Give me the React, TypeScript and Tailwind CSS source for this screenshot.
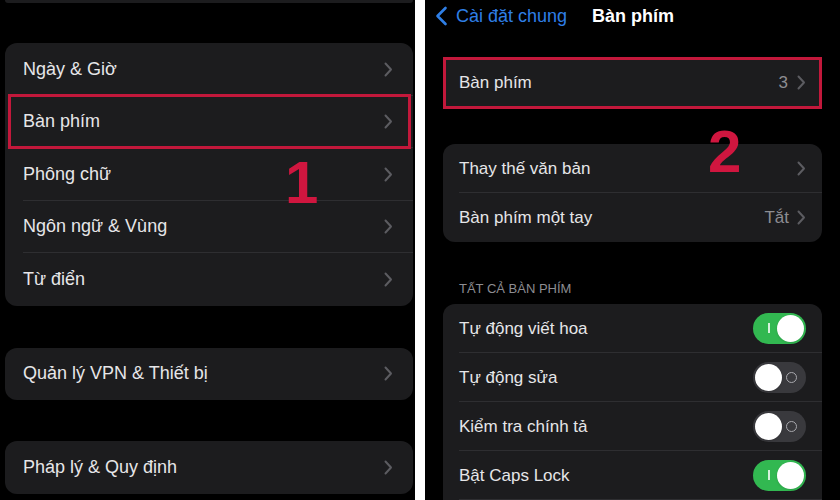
import React from "react"

const font = { fontFamily: '"Liberation Sans", Arial, sans-serif' }

function Chevron({ className = "" }: { className?: string }) {
  return (
    <svg width="9" height="15" viewBox="0 0 9 15" className={className}>
      <path d="M1.5 1.5 L7 7.5 L1.5 13.5" fill="none" stroke="#5c5c61" strokeWidth="2" strokeLinecap="round" strokeLinejoin="round" />
    </svg>
  )
}

function Toggle({ on }: { on: boolean }) {
  return (
    <div
      className={`relative w-[53px] h-[31px] rounded-full flex items-center ${on ? "bg-[#32b851] justify-end" : "bg-[#39393d] justify-start"} px-[2px]`}
    >
      {on ? (
        <span className="absolute left-[15px] top-[10px] w-[1.5px] h-[10px] bg-white/80" />
      ) : (
        <span className="absolute right-[9px] top-[10px] w-[11px] h-[11px] rounded-full border-[1.5px] border-[#a8a8ad]" />
      )}
      <div className="relative w-[27px] h-[27px] rounded-full bg-white shadow" />
    </div>
  )
}

function LeftRow({ label, last, boxed }: { label: string; last?: boolean; boxed?: boolean }) {
  return (
    <div className="relative h-[52.5px] flex items-center pl-[18px] pr-[20px]">
      <span className="flex-1 text-[18px] text-[#e6e6e8]">{label}</span>
      <Chevron />
      {!last && <div className="absolute left-[18px] right-0 bottom-0 h-px bg-[#2e2e31]" />}
      {boxed && (
        <div className="absolute left-[3px] right-[2px] -top-[2px] -bottom-[1px] border-[3px] border-[#c2183b]" />
      )}
    </div>
  )
}

function RightRow({
  label,
  value,
  toggle,
  last,
  chevron = true,
}: {
  label: string
  value?: string
  toggle?: boolean
  last?: boolean
  chevron?: boolean
}) {
  return (
    <div className="relative h-[49px] flex items-center pl-[16px] pr-[16px]">
      <span className="flex-1 text-[17px] text-[#e6e6e8]">{label}</span>
      {value && <span className="text-[17px] text-[#8d8d92] mr-[8px]">{value}</span>}
      {toggle !== undefined ? <Toggle on={toggle} /> : chevron && <Chevron />}
      {!last && <div className="absolute left-[16px] right-0 bottom-0 h-px bg-[#2e2e31]" />}
    </div>
  )
}

export default function App() {
  return (
    <div className="w-[840px] h-[500px] flex bg-white overflow-hidden" style={font}>
      {/* left screen */}
      <div className="relative w-[415px] h-[500px] bg-black overflow-hidden flex flex-col pl-[5px] pr-[2px]">
        <div className="h-[3px] bg-[#1c1c1e] rounded-b-[10px]" />
        <div className="mt-[40px] bg-[#1c1c1e] rounded-[12px]">
          <LeftRow label="Ngày & Giờ" />
          <LeftRow label="Bàn phím" boxed />
          <LeftRow label="Phông chữ" />
          <LeftRow label="Ngôn ngữ & Vùng" />
          <LeftRow label="Từ điển" last />
        </div>
        <div className="mt-[42px] bg-[#1c1c1e] rounded-[12px]">
          <LeftRow label="Quản lý VPN & Thiết bị" last />
        </div>
        <div className="mt-[41px] bg-[#1c1c1e] rounded-[12px]">
          <LeftRow label="Pháp lý & Quy định" last />
        </div>
        <div className="absolute left-[285px] top-[153px] text-[60px] font-bold leading-none text-[#d0163f]">1</div>
      </div>

      <div className="w-[10px]" />

      {/* right screen */}
      <div className="relative flex-1 h-[500px] bg-black overflow-hidden flex flex-col px-[18px]">
        <div className="h-[33px] flex items-center -ml-[8px]">
          <svg width="13" height="20" viewBox="0 0 13 20" className="mr-[8px]">
            <path d="M10.5 2 L2.5 10 L10.5 18" fill="none" stroke="#2f7fe6" strokeWidth="2.6" strokeLinecap="round" strokeLinejoin="round" />
          </svg>
          <span className="text-[18px] text-[#2f7fe6]">Cài đặt chung</span>
          <span className="ml-[25px] text-[18px] font-bold text-white">Bàn phím</span>
        </div>
        <div className="relative mt-[24px] bg-[#1c1c1e] h-[53px] flex items-center pl-[16px] pr-[16px]">
          <span className="flex-1 text-[17px] text-[#e6e6e8]">Bàn phím</span>
          <span className="text-[17px] text-[#8d8d92] mr-[9px]">3</span>
          <Chevron />
          <div className="absolute inset-0 border-[3px] border-[#c2183b]" />
        </div>
        <div className="mt-[35px] bg-[#1c1c1e] rounded-[12px]">
          <RightRow label="Thay thế văn bản" />
          <RightRow label="Bàn phím một tay" value="Tắt" last />
        </div>
        <div className="mt-[40px] pl-[16px] text-[13px] text-[#8d8d92] leading-none">TẤT CẢ BÀN PHÍM</div>
        <div className="mt-[9px] bg-[#1c1c1e] rounded-t-[12px]">
          <RightRow label="Tự động viết hoa" toggle={true} />
          <RightRow label="Tự động sửa" toggle={false} />
          <RightRow label="Kiểm tra chính tả" toggle={false} />
          <RightRow label="Bật Caps Lock" toggle={true} />
        </div>
        <div className="absolute left-[283px] top-[122px] text-[60px] font-bold leading-none text-[#d0163f]">2</div>
      </div>
    </div>
  )
}
